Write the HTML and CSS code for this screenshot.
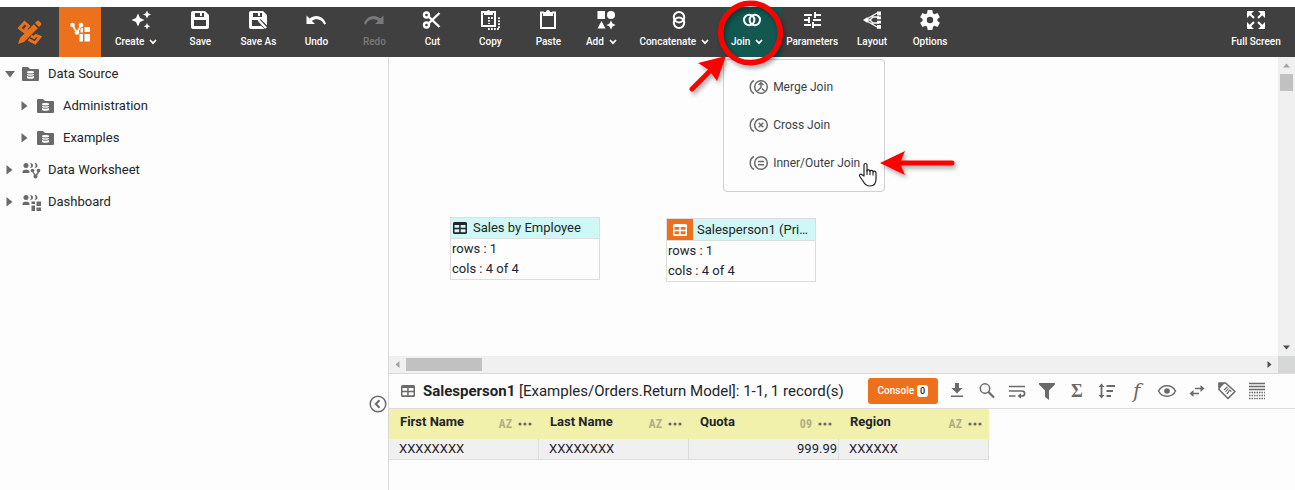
FILE: index.html
```html
<!DOCTYPE html>
<html lang="en">
<head>
<meta charset="utf-8">
<title>Data Worksheet</title>
<link rel="stylesheet" href="styles.css">
</head>
<body>
<svg class="defs" aria-hidden="true">
  <symbol id="i-caret" viewBox="0 0 8 6"><path d="M1 1l3 3.200L7 1" fill="none" stroke="currentColor" stroke-width="1.700"/></symbol>
  <symbol id="i-folder" viewBox="0 0 17 14"><path fill="currentColor" d="M1 0h5l2 2h8a1 1 0 0 1 1 1v10a1 1 0 0 1-1 1H1a1 1 0 0 1-1-1V1a1 1 0 0 1 1-1z"/><path fill="#fdfdfd" d="M5 4.600C5 3.700 12 3.700 12 4.600V11C12 12 5 12 5 11z"/><path d="M5 6.200c1.500.9 5.500.9 7 0M5 8.600c1.500.9 5.500.9 7 0" fill="none" stroke="currentColor"/></symbol>
  <symbol id="i-people" viewBox="0 0 20 17"><g fill="currentColor"><circle cx="4" cy="3.500" r="2.500"/><path d="M.5 11V9.500C.5 7 7.500 7 7.500 9.500V11zM8 1c4 0 4 5 0 5 1.500-1.500 1.500-3.500 0-5zM12.500 1c4 0 4 5 0 5 1.500-1.500 1.500-3.500 0-5z"/></g></symbol>
  <symbol id="i-table" viewBox="0 0 14 12"><path fill="currentColor" fill-rule="evenodd" d="M1.500 0h11A1.500 1.500 0 0 1 14 1.500v9a1.500 1.500 0 0 1-1.500 1.500h-11A1.500 1.500 0 0 1 0 10.500v-9A1.500 1.500 0 0 1 1.500 0zM1.500 3v2.700h4.700V3zm6.200 0v2.700h4.800V3zM1.500 7.200v3h4.700v-3zm6.200 0v3h4.800v-3z"/></symbol>
  <symbol id="i-dots" viewBox="0 0 14 4"><g fill="currentColor"><circle cx="2" cy="2" r="1.600"/><circle cx="7" cy="2" r="1.600"/><circle cx="12" cy="2" r="1.600"/></g></symbol>
</svg>

<header class="toolbar">
  <a class="brand" href="#" aria-label="Composer">
    <svg width="25" height="25" viewBox="0 0 25 25"><g fill="none" stroke="currentColor"><path stroke-width="2.800" d="M9.500 13.500L2.500 8l5-5.500 4 3.500-3 3 2 2M14 16l3 1.500 2-2 4 1.500-5 6-6.500-3.500"/></g><path fill="currentColor" d="M16.800 4.200l4 4L7 22l-6 2 2-6z"/><path fill="currentColor" d="M18 3l2-2a1.500 1.500 0 0 1 2 0l2 2a1.500 1.500 0 0 1 0 2l-2 2z"/></svg>
  </a>
  <button class="mode" aria-label="Worksheet">
    <svg width="22" height="20" viewBox="0 0 22 20"><path fill="none" stroke="currentColor" stroke-width="1.600" d="M3.500 3L8 11l4-8"/><g fill="currentColor"><circle cx="3.500" cy="3" r="2.300"/><circle cx="12" cy="3" r="2.300"/><circle cx="8" cy="10.500" r="2.300"/><path d="M10.500 12h3.500v7.500h-3.500zM15.500 5H21v5h-5.500zM15.500 12H21v7.500h-5.500zM11.500 6.500l2.500-1v5h-2.500z"/></g></svg>
  </button>
  <nav class="tools" aria-label="Worksheet tools">
    <button class="tool"><svg class="icon" viewBox="0 0 24 24"><path fill="currentColor" d="M9 5.500l2 4.500 4.500 2-4.500 2-2 4.500L7 14l-4.500-2L7 10zM18 2.500l1.200 2.800L22 6.500l-2.800 1.200L18 10.500l-1.200-2.800L14 6.500l2.800-1.200zM18 15l1 2.200 2.200 1-2.200 1-1 2.200-1-2.200-2.200-1 2.200-1z"/></svg><span class="label">Create<svg class="caret"><use href="#i-caret"/></svg></span></button>
    <button class="tool"><svg class="icon" viewBox="0 0 24 24"><path fill="currentColor" fill-rule="evenodd" d="M5 3h12l4 4v12a2 2 0 0 1-2 2H5a2 2 0 0 1-2-2V5a2 2 0 0 1 2-2zM7 5v4h9V5h-2v3h-2V5zM6 12v6h12v-6z"/></svg><span class="label">Save</span></button>
    <button class="tool"><svg class="icon" viewBox="0 0 24 24"><path fill="currentColor" fill-rule="evenodd" d="M5 3h12l4 4v12a2 2 0 0 1-2 2H5a2 2 0 0 1-2-2V5a2 2 0 0 1 2-2zM7 5v4h9V5h-2v3h-2V5zM6 12v6h9l-3-6z"/><path stroke="#404040" stroke-width="4.500" d="M13 12.500l8 8"/><path stroke="currentColor" stroke-width="2.400" d="M12.500 12l7.500 8"/></svg><span class="label">Save As</span></button>
    <button class="tool"><svg class="icon" viewBox="0 0 24 24"><path fill="currentColor" d="M12.500 8c-2.650 0-5.050.99-6.900 2.600L2.500 7.500V16H11l-3.100-3.100c1.200-1 2.800-1.700 4.600-1.700 3.500 0 6.500 2.200 7.600 5.300l1.900-.7C20.700 11.600 17 8 12.500 8z"/></svg><span class="label">Undo</span></button>
    <button class="tool" disabled><svg class="icon" viewBox="0 0 24 24"><path fill="currentColor" d="M11.500 8c2.650 0 5.050.99 6.900 2.600l3.100-3.100V16H13l3.100-3.100c-1.200-1-2.800-1.700-4.600-1.700-3.500 0-6.500 2.200-7.600 5.300l-1.900-.7C3.300 11.600 7 8 11.500 8z"/></svg><span class="label">Redo</span></button>
    <button class="tool"><svg class="icon" viewBox="0 0 24 24"><g fill="none" stroke="currentColor" stroke-width="2.400"><circle cx="6.500" cy="7" r="2.500"/><circle cx="6.500" cy="17" r="2.500"/><path d="M8.500 8.500L19.500 19M8.500 15.500L19.500 5"/></g></svg><span class="label">Cut</span></button>
    <button class="tool"><svg class="icon" viewBox="0 0 24 24"><path fill="none" stroke="currentColor" stroke-width="2" d="M7 4H4v14h13V4h-3"/><path fill="currentColor" d="M6 3h3a1.700 1.700 0 0 1 3 0h3v4H6z"/><path fill="none" stroke="currentColor" stroke-width="1.800" stroke-dasharray="1.800 1.200" d="M10 21h11V9M10 10h5M11 12v4"/></svg><span class="label">Copy</span></button>
    <button class="tool"><svg class="icon" viewBox="0 0 24 24"><path fill="none" stroke="currentColor" stroke-width="2" d="M8 4.500H5V20h14V4.500h-3"/><path fill="currentColor" d="M7 4h3a2 2 0 0 1 4 0h3v4H7z"/></svg><span class="label">Paste</span></button>
    <button class="tool"><svg class="icon" viewBox="0 0 24 24"><path fill="currentColor" d="M3.500 3H11v8H3.500zM7.500 13l4 7.500h-8zM17 12.500l1.500 3 3 1.500-3 1.500-1.500 3-1.500-3-3-1.500 3-1.500z"/><circle cx="17" cy="7" r="4" fill="currentColor"/></svg><span class="label">Add<svg class="caret"><use href="#i-caret"/></svg></span></button>
    <button class="tool"><svg class="icon" viewBox="0 0 24 24"><g fill="none" stroke="currentColor" stroke-width="2"><circle cx="12" cy="9.200" r="5.200"/><circle cx="12" cy="14.800" r="5.200"/></g></svg><span class="label">Concatenate<svg class="caret"><use href="#i-caret"/></svg></span></button>
    <div class="join">
      <button class="tool active" aria-expanded="true"><svg class="icon" viewBox="0 0 24 24"><g fill="none" stroke="currentColor" stroke-width="2"><circle cx="9.200" cy="12" r="5.200"/><circle cx="14.800" cy="12" r="5.200"/></g></svg><span class="label">Join<svg class="caret"><use href="#i-caret"/></svg></span></button>
      <div class="menu">
        <button class="item"><svg class="icon-s" viewBox="0 0 20 16"><g fill="none" stroke="currentColor" stroke-width="1.500"><circle cx="12" cy="8" r="6.300"/><path d="M5 1.500C0 4 0 12 5 14.500M9.500 6L12 3.800 14.500 6M12 4v4.500L8.500 12M13 9.500l2.500 2.500"/></g></svg>Merge Join</button>
        <button class="item"><svg class="icon-s" viewBox="0 0 20 16"><g fill="none" stroke="currentColor" stroke-width="1.500"><circle cx="12" cy="8" r="6.300"/><path d="M5 1.500C0 4 0 12 5 14.500M9.700 5.700l4.600 4.600M14.300 5.700l-4.600 4.600"/></g></svg>Cross Join</button>
        <button class="item"><svg class="icon-s" viewBox="0 0 20 16"><g fill="none" stroke="currentColor" stroke-width="1.500"><circle cx="12" cy="8" r="6.300"/><path d="M5 1.500C0 4 0 12 5 14.500M9 6.500h6M9 9.800h6"/></g></svg>Inner/Outer Join</button>
        <svg class="pointer" viewBox="0 0 20 26"><path fill="#fff" stroke="#222" stroke-width="1.200" stroke-linejoin="round" d="M6 14V3c0-2 3-2 3 0v6c.2-1.500 2.800-1.500 3 .3.300-1.400 2.700-1.200 3 .5.500-1.200 2.800-.8 3 1V17c0 4-2 7-6 7-4 0-5.500-2-7-5l-3.500-5c-.5-1.800 1.500-2.500 2.500-1.200z"/><path stroke="#222" stroke-width="1.100" d="M9 8v5M12 9v4M15 10v3.500"/></svg>
        <svg class="mark-arrow" viewBox="0 0 84 34"><g fill="#f00"><path d="M4 14L29 2l-5 12 5 12z"/></g><path stroke="#f00" stroke-width="5" stroke-linecap="round" d="M23 14h53"/></svg>
      </div>
      <svg class="mark-ring" viewBox="0 0 106 106"><circle cx="66.500" cy="33" r="29.800" fill="none" stroke="#f00" stroke-width="5.500"/><path fill="#f00" d="M42 56l-28 7 11 7 8 11z"/><path stroke="#f00" stroke-width="5" stroke-linecap="round" d="M8 89l22-22"/></svg>
    </div>
    <button class="tool wide"><svg class="icon" viewBox="0 0 24 24"><path fill="none" stroke="currentColor" stroke-width="2" d="M4 7h8M15 7h6M15 4v6M4 12h6M13 12h8M9 9v6M4 17h7M14 17h7M13 14v6"/></svg><span class="label">Parameters</span></button>
    <button class="tool"><svg class="icon" viewBox="0 0 24 24"><path fill="none" stroke="currentColor" stroke-width="1.300" d="M6 12h5M6 11.500L17 5M6 12.500L17 19M10 12l3-3h6M10 12l3 3h6"/><path fill="currentColor" d="M3 12l4.500-3v6zM17 3.500h4v4h-4zM17 8.500h4v2.800h-4zM17 12.800h4v2.700h-4zM17 17h4v3.700h-4z"/></svg><span class="label">Layout</span></button>
    <button class="tool"><svg class="icon" viewBox="0 0 24 24"><path fill="currentColor" d="M19.400 13c.04-.3.060-.6.060-1s-.02-.7-.07-1l2.100-1.600c.2-.15.240-.4.120-.6l-2-3.450c-.12-.2-.37-.3-.6-.2l-2.480 1c-.5-.4-1.070-.7-1.700-.96L14.460 2.500A.5.500 0 0 0 14 2.100h-4a.5.500 0 0 0-.5.400l-.37 2.700c-.6.240-1.160.57-1.680.95l-2.500-1c-.2-.1-.47 0-.6.200l-2 3.450c-.12.200-.07.46.12.600L4.600 11a8 8 0 0 0 0 2l-2.100 1.600c-.2.150-.24.400-.12.600l2 3.450c.13.200.38.300.6.200l2.500-1c.5.400 1.070.72 1.680.96l.37 2.700c.05.22.25.390.5.390h4c.25 0 .45-.17.5-.4l.37-2.700c.6-.24 1.160-.57 1.680-.95l2.480 1c.23.100.48 0 .6-.2l2-3.450c.12-.2.080-.46-.12-.6zM12 15.200a3.200 3.200 0 1 1 0-6.400 3.200 3.200 0 0 1 0 6.400z"/></svg><span class="label">Options</span></button>
    <button class="tool last"><svg class="icon" viewBox="0 0 24 24"><g fill="currentColor"><path d="M3 3h7L3 10zM21 3v7l-7-7zM3 21v-7l7 7zM21 21h-7l7-7z"/></g><path stroke="currentColor" stroke-width="2" d="M5 5l5 5M19 5l-5 5M5 19l5-5M19 19l-5-5"/></svg><span class="label">Full Screen</span></button>
  </nav>
</header>

<main class="layout">
  <aside class="sidebar">
    <ul class="tree">
      <li><button class="node"><svg class="arrow" viewBox="0 0 10 10"><path d="M0 2h10L5 8.500z"/></svg><svg class="folder"><use href="#i-folder"/></svg>Data Source</button>
        <ul class="nested">
          <li><button class="node"><svg class="arrow" viewBox="0 0 10 10"><path d="M1.500 0v9.500L7.500 5z"/></svg><svg class="folder"><use href="#i-folder"/></svg>Administration</button></li>
          <li><button class="node"><svg class="arrow" viewBox="0 0 10 10"><path d="M1.500 0v9.500L7.500 5z"/></svg><svg class="folder"><use href="#i-folder"/></svg>Examples</button></li>
        </ul>
      </li>
      <li><button class="node"><svg class="arrow" viewBox="0 0 10 10"><path d="M1.500 0v9.500L7.500 5z"/></svg><svg class="people" viewBox="0 0 20 17"><use href="#i-people"/><path stroke="currentColor" stroke-width="1.400" fill="none" d="M10.500 8.500l3 6 4-6"/><g fill="currentColor"><circle cx="10.500" cy="8.500" r="1.800"/><circle cx="16.500" cy="8.500" r="1.800"/><circle cx="13.500" cy="14.500" r="2"/></g></svg>Data Worksheet</button></li>
      <li><button class="node"><svg class="arrow" viewBox="0 0 10 10"><path d="M1.500 0v9.500L7.500 5z"/></svg><svg class="people" viewBox="0 0 20 17"><use href="#i-people"/><path fill="currentColor" d="M9.500 7.500h3.500v2.500H9.500zM14.500 7.500H19V12h-4.500zM9.500 11.500h3.500V17H9.500zM14.500 13.500H19V17h-4.500z"/></svg>Dashboard</button></li>
    </ul>
    <button class="collapse" aria-label="Collapse panel"><svg width="18" height="18" viewBox="0 0 18 18"><g fill="none" stroke="currentColor"><circle cx="9" cy="9" r="7.800" stroke-width="1.500"/><path stroke-width="2" d="M10.500 5.200L6.800 9l3.700 3.800"/></g></svg></button>
  </aside>

  <section class="work">
    <div class="canvas-frame">
      <div class="canvas">
        <article class="card first">
          <h2 class="card-head"><span class="card-icon"><svg class="grid"><use href="#i-table"/></svg></span><span class="card-title">Sales by Employee</span></h2>
          <p class="fact">rows : 1</p><p class="fact">cols : 4 of 4</p>
        </article>
        <article class="card second">
          <h2 class="card-head"><span class="card-icon primary"><svg class="grid"><use href="#i-table"/></svg></span><span class="card-title">Salesperson1 (Pri…</span></h2>
          <p class="fact">rows : 1</p><p class="fact">cols : 4 of 4</p>
        </article>
      </div>
      <div class="vbar"><svg width="9" height="5" viewBox="0 0 9 5"><path fill="#a3a3a3" d="M1 4.500h7L4.500.5z"/></svg><span class="vthumb"></span><svg class="end" width="9" height="5" viewBox="0 0 9 5"><path fill="#505050" d="M1 .5h7l-3.500 4z"/></svg></div>
      <div class="hbar"><svg width="5" height="9" viewBox="0 0 5 9"><path fill="#a3a3a3" d="M4.500 1v7L.5 4.500z"/></svg><span class="hthumb"></span><svg class="end" width="5" height="9" viewBox="0 0 5 9"><path fill="#505050" d="M.5 1v7l4-3.500z"/></svg></div>
      <div class="corner"></div>
    </div>

    <section class="preview">
      <div class="preview-bar">
        <svg class="grid"><use href="#i-table"/></svg>
        <h1 class="title"><b>Salesperson1</b> [Examples/Orders.Return Model]: 1-1, 1 record(s)</h1>
        <button class="console">Console<span class="count">0</span></button>
        <div class="actions">
          <button class="act" aria-label="Export"><svg viewBox="0 0 20 20"><path fill="currentColor" d="M8 2h4v5h3.500L10 12.500 4.500 7H8zM4 14.500h12V16H4z"/></svg></button>
          <button class="act" aria-label="Search"><svg viewBox="0 0 20 20"><g fill="none" stroke="currentColor"><circle cx="8" cy="7.500" r="4.700" stroke-width="1.500"/><path stroke-width="2.200" d="M11.500 11l5.500 5.500"/></g></svg></button>
          <button class="act" aria-label="Wrap"><svg viewBox="0 0 20 20"><path fill="none" stroke="currentColor" stroke-width="1.700" d="M2 5.500h16M2 10h13c3.500 0 3.500 5 0 5h-3M2 15h6.500"/><path fill="currentColor" d="M10.500 15l3.500-2.800v5.600z"/></svg></button>
          <button class="act" aria-label="Filter"><svg viewBox="0 0 20 20"><path fill="currentColor" d="M2 2h16v1.500L12 9.500V19l-4-3V9.500l-6-6z"/></svg></button>
          <button class="act sigma" aria-label="Aggregate">Σ</button>
          <button class="act" aria-label="Sort"><svg viewBox="0 0 20 20"><path fill="none" stroke="currentColor" stroke-width="1.800" d="M4.500 4v12M9.500 5h8.500M9.500 10h6.500M9.500 15h4.500"/><path fill="currentColor" d="M4.500 2.500L7.500 6h-6zM4.500 17.500l3-3.500h-6z"/></svg></button>
          <button class="act func" aria-label="Formula">f</button>
          <button class="act" aria-label="Visibility"><svg viewBox="0 0 20 20"><path fill="none" stroke="currentColor" stroke-width="1.500" d="M1.500 10C5 3 15 3 18.500 10 15 17 5 17 1.500 10z"/><circle cx="10" cy="10" r="2.800" fill="currentColor"/></svg></button>
          <button class="act" aria-label="Swap"><svg viewBox="0 0 20 20"><path fill="none" stroke="currentColor" stroke-width="1.700" d="M8 7.500h7M5 12.500h7"/><path fill="currentColor" d="M13.500 4l4 3.500-4 3.500zM6.500 9l-4 3.500 4 3.500z"/></svg></button>
          <button class="act" aria-label="Tag"><svg viewBox="0 0 20 20"><g fill="none" stroke="currentColor"><path stroke-width="1.600" stroke-linejoin="round" d="M2 2h6.500l9.500 8.500-7 7L2 8.500z"/><path stroke-width="1.100" d="M7 9l3.500-3M8.500 11l3-3.500M10 13c0-2 2-1 2-3s2-.5 2 1"/></g><path fill="currentColor" d="M2 2h6L2 8z"/></svg></button>
          <button class="act" aria-label="Density"><svg viewBox="0 0 20 20"><g stroke="currentColor" stroke-width="1.300"><path d="M2 2.500h16M2 5.500h16M2 8.500h16"/><path stroke-dasharray="1.500 1" d="M2 11.500h16M2 14.500h16M2 17.500h16"/></g></svg></button>
        </div>
      </div>
      <table class="data">
        <thead><tr>
          <th scope="col"><div class="col"><span class="name">First Name</span><span class="type">AZ</span><button class="more" aria-label="Column menu"><svg><use href="#i-dots"/></svg></button></div></th>
          <th scope="col"><div class="col"><span class="name">Last Name</span><span class="type">AZ</span><button class="more" aria-label="Column menu"><svg><use href="#i-dots"/></svg></button></div></th>
          <th scope="col"><div class="col"><span class="name">Quota</span><span class="type">09</span><button class="more" aria-label="Column menu"><svg><use href="#i-dots"/></svg></button></div></th>
          <th scope="col"><div class="col"><span class="name">Region</span><span class="type">AZ</span><button class="more" aria-label="Column menu"><svg><use href="#i-dots"/></svg></button></div></th>
        </tr></thead>
        <tbody><tr><td>XXXXXXXX</td><td>XXXXXXXX</td><td class="num">999.99</td><td>XXXXXX</td></tr></tbody>
      </table>
    </section>
  </section>
</main>
</body>
</html>
```
FILE: styles.css
```css
* { box-sizing: border-box; }
body {
  margin: 0;
  padding-top: 7px;
  min-height: 100vh;
  display: flex;
  flex-direction: column;
  background: #fff;
  color: #212529;
  font: 13px/20px Roboto, sans-serif;
}
button { margin: 0; padding: 0; border: 0; background: none; color: inherit; font: inherit; cursor: pointer; }
svg { display: block; flex: none; }
.defs { position: absolute; width: 0; height: 0; }
h1, h2, p, ul { margin: 0; padding: 0; font-size: inherit; font-weight: 400; list-style: none; }

/* Toolbar */
.toolbar { display: flex; height: 50px; background: #404040; color: #fff; }
.brand { display: flex; align-items: center; justify-content: center; width: 59px; color: #ed711c; }
.mode { display: flex; align-items: center; justify-content: center; width: 42px; background: #ed711c; }
.tools { display: flex; flex: 1; padding-left: 10px; }
.tool { display: flex; flex-direction: column; align-items: center; height: 50px; min-width: 58px; padding: 1px 4px 0; font-size: 10px; font-weight: 500; line-height: 20px; white-space: nowrap; }
.tool:disabled { color: #77797b; }
.tool.active { background: #125750; }
.tool.wide { padding: 1px 5px 0; }
.tool.last { margin-left: auto; min-width: 78px; }
.icon { width: 24px; height: 24px; }
.label { display: flex; align-items: center; }
.caret { width: 8px; height: 6px; margin: 0 10px 0 5px; }

/* Join menu */
.join { position: relative; }
.menu { position: absolute; z-index: 2; top: 52px; left: 0; width: 162px; padding: 8px 0 9px; border: 1px solid #d0d0d0; border-radius: 4px; background: #fdfdfd; color: #3b4045; }
.item { display: flex; align-items: center; gap: 4px; width: 100%; height: 38px; padding-left: 25px; font-size: 12px; }
.icon-s { width: 20px; height: 16px; color: #6a6a6a; }
.pointer { position: absolute; left: 134px; top: 102px; width: 20px; height: 26px; }
.mark-arrow { position: absolute; left: 152px; top: 89px; width: 84px; height: 34px; filter: drop-shadow(2px 3px 2px #0005); }
.mark-ring { position: absolute; z-index: 3; left: -39px; top: -7px; width: 106px; height: 106px; filter: drop-shadow(2px 3px 2px #0005); pointer-events: none; }

/* Sidebar */
.layout { display: flex; flex: 1; background: #fdfdfd; }
.sidebar { position: relative; flex: none; width: 389px; border-right: 1px solid #d9d9d9; }
.tree { padding-top: 1px; }
.node { display: flex; align-items: center; width: 100%; height: 32px; padding-left: 5px; }
.nested { padding-left: 15px; }
.arrow { width: 10px; height: 10px; margin-right: 7px; fill: #6a6a6a; }
.folder { width: 17px; height: 14px; margin-right: 9px; color: #6a6a6a; }
.people { width: 20px; height: 17px; margin-right: 6px; color: #6a6a6a; }
.collapse { position: absolute; right: 1px; bottom: 77px; color: #6a6a6a; }

/* Canvas */
.work { display: flex; flex: 1; flex-direction: column; min-width: 0; }
.canvas-frame { display: grid; flex: 1; grid-template: 1fr 17px / 1fr 17px; }
.canvas { position: relative; overflow: hidden; }
.card { position: absolute; width: 150px; border: 1px solid #ddd; background: #fdfdfd; }
.card.first { left: 61px; top: 160px; }
.card.second { left: 277px; top: 161px; }
.card-head { display: flex; align-items: center; height: 21px; border-bottom: 1px solid #ddd; background: #cff7f5; }
.second .card-head { height: 22px; }
.card-icon { display: flex; align-items: center; justify-content: center; flex: none; height: 100%; width: 18px; margin-right: 4px; }
.card-icon.primary { width: 26px; background: #ed711c; color: #fff; }
.grid { width: 14px; height: 12px; }
.card-title { white-space: nowrap; }
.fact { padding-left: 1px; }
.vbar, .hbar { display: flex; align-items: center; background: #f0f0f0; }
.vbar { flex-direction: column; padding: 6px 0; }
.vthumb { width: 13px; height: 17px; margin-top: 6px; background: #c1c1c1; }
.vbar .end { margin-top: auto; }
.hbar { padding: 0 6px; }
.hthumb { width: 76px; height: 13px; margin-left: 6px; background: #c1c1c1; }
.hbar .end { margin-left: auto; }
.corner { background: #d6d8d8; }

/* Preview */
.preview { min-height: 117px; border-top: 1px solid #ddd; }
.preview-bar { display: flex; align-items: center; height: 35px; padding-left: 12px; border-bottom: 1px solid #ddd; }
.preview-bar > .grid { margin-right: 8px; color: #6a6a6a; }
.title { margin-right: 24px; font-size: 15px; white-space: nowrap; }
.console { display: flex; align-items: center; justify-content: center; gap: 3px; width: 70px; height: 26px; border-radius: 3px; background: #ed711c; color: #fff; font-size: 10px; font-weight: 500; }
.count { width: 11px; border-radius: 3px; background: #fff; color: #212529; font-size: 9px; line-height: 12px; }
.actions { display: flex; margin-left: 4px; color: #6a6a6a; }
.act { display: flex; align-items: center; justify-content: center; width: 30px; height: 26px; }
.act svg { width: 20px; height: 20px; }
.sigma { font: bold 18px/20px "Liberation Serif", serif; }
.func { font: italic 20px/20px "DejaVu Serif", serif; }
.data { width: 600px; table-layout: fixed; border-collapse: separate; border-spacing: 0; }
.data th { height: 30px; padding: 0 7px 0 11px; background: #f2f1ab; text-align: left; font-weight: 700; }
.col { display: flex; align-items: center; }
.name { flex: 1; padding-bottom: 4px; }
.type { margin-right: 6px; color: #b1b084; font: bold 12px/20px "Roboto Condensed", "Liberation Sans Narrow", "Liberation Mono", monospace; }
.more svg { width: 14px; height: 4px; color: #6a6a6a; }
.data td { height: 21px; padding: 0 0 0 10px; border-right: 1px solid #ddd; border-bottom: 1px solid #ddd; background: #f0f0f0; }
.data .num { padding-right: 1px; text-align: right; }
```
